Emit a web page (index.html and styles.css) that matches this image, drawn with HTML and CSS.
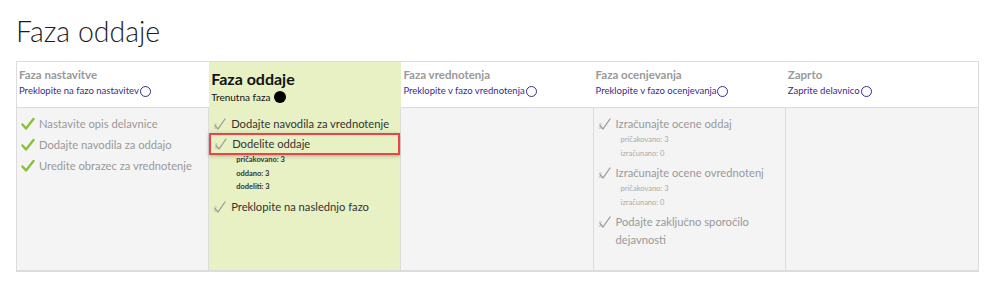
FILE: index.html
```html
<!DOCTYPE html>
<html lang="sl">
<head>
    <meta charset="UTF-8">
    <meta name="viewport" content="width=device-width, initial-scale=1.0">
    <title>Faza oddaje</title>
    <link rel="stylesheet" href="styles.css">
</head>
<body>
    <main class="page">
        <h2 class="page-title">Faza oddaje</h2>

        <div class="phases">
            <!-- header row -->
            <div class="phase-head">
                <div class="phase-name">Faza nastavitve</div>
                <a class="phase-switch">Preklopite na fazo nastavitev<span class="ring"></span></a>
            </div>
            <div class="phase-head active">
                <div class="phase-name">Faza oddaje</div>
                <div class="phase-current">Trenutna faza<span class="dot"></span></div>
            </div>
            <div class="phase-head">
                <div class="phase-name">Faza vrednotenja</div>
                <a class="phase-switch">Preklopite v fazo vrednotenja<span class="ring"></span></a>
            </div>
            <div class="phase-head">
                <div class="phase-name">Faza ocenjevanja</div>
                <a class="phase-switch">Preklopite v fazo ocenjevanja<span class="ring"></span></a>
            </div>
            <div class="phase-head">
                <div class="phase-name">Zaprto</div>
                <a class="phase-switch">Zaprite delavnico<span class="ring"></span></a>
            </div>

            <!-- task row -->
            <div class="phase-tasks">
                <ul class="tasks">
                    <li class="task done"><svg class="icon" viewBox="0 0 14 14"><path d="M1.5 7.5l3.5 4L12.5 2"/></svg>Nastavite opis delavnice</li>
                    <li class="task done"><svg class="icon" viewBox="0 0 14 14"><path d="M1.5 7.5l3.5 4L12.5 2"/></svg>Dodajte navodila za oddajo</li>
                    <li class="task done"><svg class="icon" viewBox="0 0 14 14"><path d="M1.5 7.5l3.5 4L12.5 2"/></svg>Uredite obrazec za vrednotenje</li>
                </ul>
            </div>
            <div class="phase-tasks active">
                <ul class="tasks">
                    <li class="task todo"><svg class="icon" viewBox="0 0 14 14"><path d="M2 8.5l3 3.5L12 2"/><path class="dash" d="M1 11h3M1.5 7h2"/></svg>Dodajte navodila za vrednotenje</li>
                    <li class="task todo highlight"><svg class="icon" viewBox="0 0 14 14"><path d="M2 8.5l3 3.5L12 2"/><path class="dash" d="M1 11h3M1.5 7h2"/></svg>Dodelite oddaje</li>
                    <li class="task-info">
                        <div>pričakovano: 3</div>
                        <div>oddano: 3</div>
                        <div>dodeliti: 3</div>
                    </li>
                    <li class="task todo"><svg class="icon" viewBox="0 0 14 14"><path d="M2 8.5l3 3.5L12 2"/><path class="dash" d="M1 11h3M1.5 7h2"/></svg>Preklopite na naslednjo fazo</li>
                </ul>
            </div>
            <div class="phase-tasks"></div>
            <div class="phase-tasks">
                <ul class="tasks">
                    <li class="task todo"><svg class="icon" viewBox="0 0 14 14"><path d="M2 8.5l3 3.5L12 2"/><path class="dash" d="M1 11h3M1.5 7h2"/></svg>Izračunajte ocene oddaj</li>
                    <li class="task-info">
                        <div>pričakovano: 3</div>
                        <div>izračunano: 0</div>
                    </li>
                    <li class="task todo"><svg class="icon" viewBox="0 0 14 14"><path d="M2 8.5l3 3.5L12 2"/><path class="dash" d="M1 11h3M1.5 7h2"/></svg>Izračunajte ocene ovrednotenj</li>
                    <li class="task-info">
                        <div>pričakovano: 3</div>
                        <div>izračunano: 0</div>
                    </li>
                    <li class="task todo"><svg class="icon" viewBox="0 0 14 14"><path d="M2 8.5l3 3.5L12 2"/><path class="dash" d="M1 11h3M1.5 7h2"/></svg>Podajte zaključno sporočilo dejavnosti</li>
                </ul>
            </div>
            <div class="phase-tasks"></div>
        </div>
    </main>
</body>
</html>
```

FILE: styles.css
```css
:root {
    --border: #dcdcdc;
    --active-bg: #e7f1c4;
    --body-bg: #f4f4f4;
    --link: #3b2a8e;
    --muted: #999;
}

* {
    margin: 0;
    padding: 0;
    box-sizing: border-box;
}

body {
    font-family: 'Lato', 'Noto Sans', sans-serif;
    color: #333;
    background: #fff;
}

.page {
    padding: 13px 14px 0 16px;
}

.page-title {
    font-size: 28.5px;
    font-weight: 300;
    color: #1d1d1d;
    line-height: 36px;
    margin-bottom: 12px;
}

.phases {
    display: grid;
    grid-template-columns: repeat(5, 1fr);
    grid-template-rows: 46px 162px;
    border: 1px solid var(--border);
    border-bottom-width: 2px;
}

.phase-head {
    padding: 5px 2px 0;
    border-bottom: 1px solid var(--border);
}

.phase-head.active {
    background: var(--active-bg);
    border-bottom-color: var(--active-bg);
}

.phase-name {
    font-size: 11.5px;
    font-weight: bold;
    color: var(--muted);
    line-height: 15px;
}

.phase-head.active .phase-name {
    font-size: 16px;
    color: #111;
    line-height: 22px;
    padding-top: 1px;
}

.phase-switch,
.phase-current {
    display: flex;
    align-items: center;
    font-size: 9.5px;
    line-height: 14px;
    margin-top: 2px;
}

.phase-switch {
    color: var(--link);
}

.phase-current {
    color: #111;
    font-size: 10px;
    margin-top: 0;
}

.ring,
.dot {
    display: inline-block;
    width: 11px;
    height: 11px;
    border-radius: 50%;
    margin-left: 1px;
}

.ring {
    border: 1.5px solid var(--link);
}

.dot {
    width: 12px;
    height: 12px;
    margin-left: 3px;
    background: #000;
}

.phase-tasks {
    background: var(--body-bg);
    border-right: 1px solid var(--border);
    padding-top: 6px;
}

.phase-tasks:last-child {
    border-right: none;
}

.phase-tasks.active {
    background: var(--active-bg);
}

.tasks {
    list-style: none;
}

.task {
    display: flex;
    align-items: flex-start;
    font-size: 11.2px;
    line-height: 18px;
    color: var(--muted);
    padding: 1px 4px 2px 4px;
}

.phase-tasks.active .task {
    color: #333;
}

.icon {
    flex: none;
    width: 14px;
    height: 14px;
    margin: 2px 4px 0 0;
    fill: none;
    stroke-linecap: round;
    stroke-linejoin: round;
}

.done .icon {
    stroke: #88c03a;
    stroke-width: 2.4;
}

.todo .icon {
    stroke: #999;
    stroke-width: 1.3;
}

.todo .icon .dash {
    stroke: #bbb;
    stroke-width: 1;
}

.task.highlight {
    border: 2px solid #ec4248;
    box-shadow: 0 1px 4px rgba(0, 0, 0, 0.25);
    margin-top: -2px;
    padding: 0 2px 0 3px;
}

.task-info {
    font-size: 7.5px;
    line-height: 13.5px;
    margin-top: -2px;
    padding: 0 0 3px 27px;
    color: #aaa;
}

.phase-tasks.active .task-info {
    color: #333;
    font-weight: bold;
}
```
